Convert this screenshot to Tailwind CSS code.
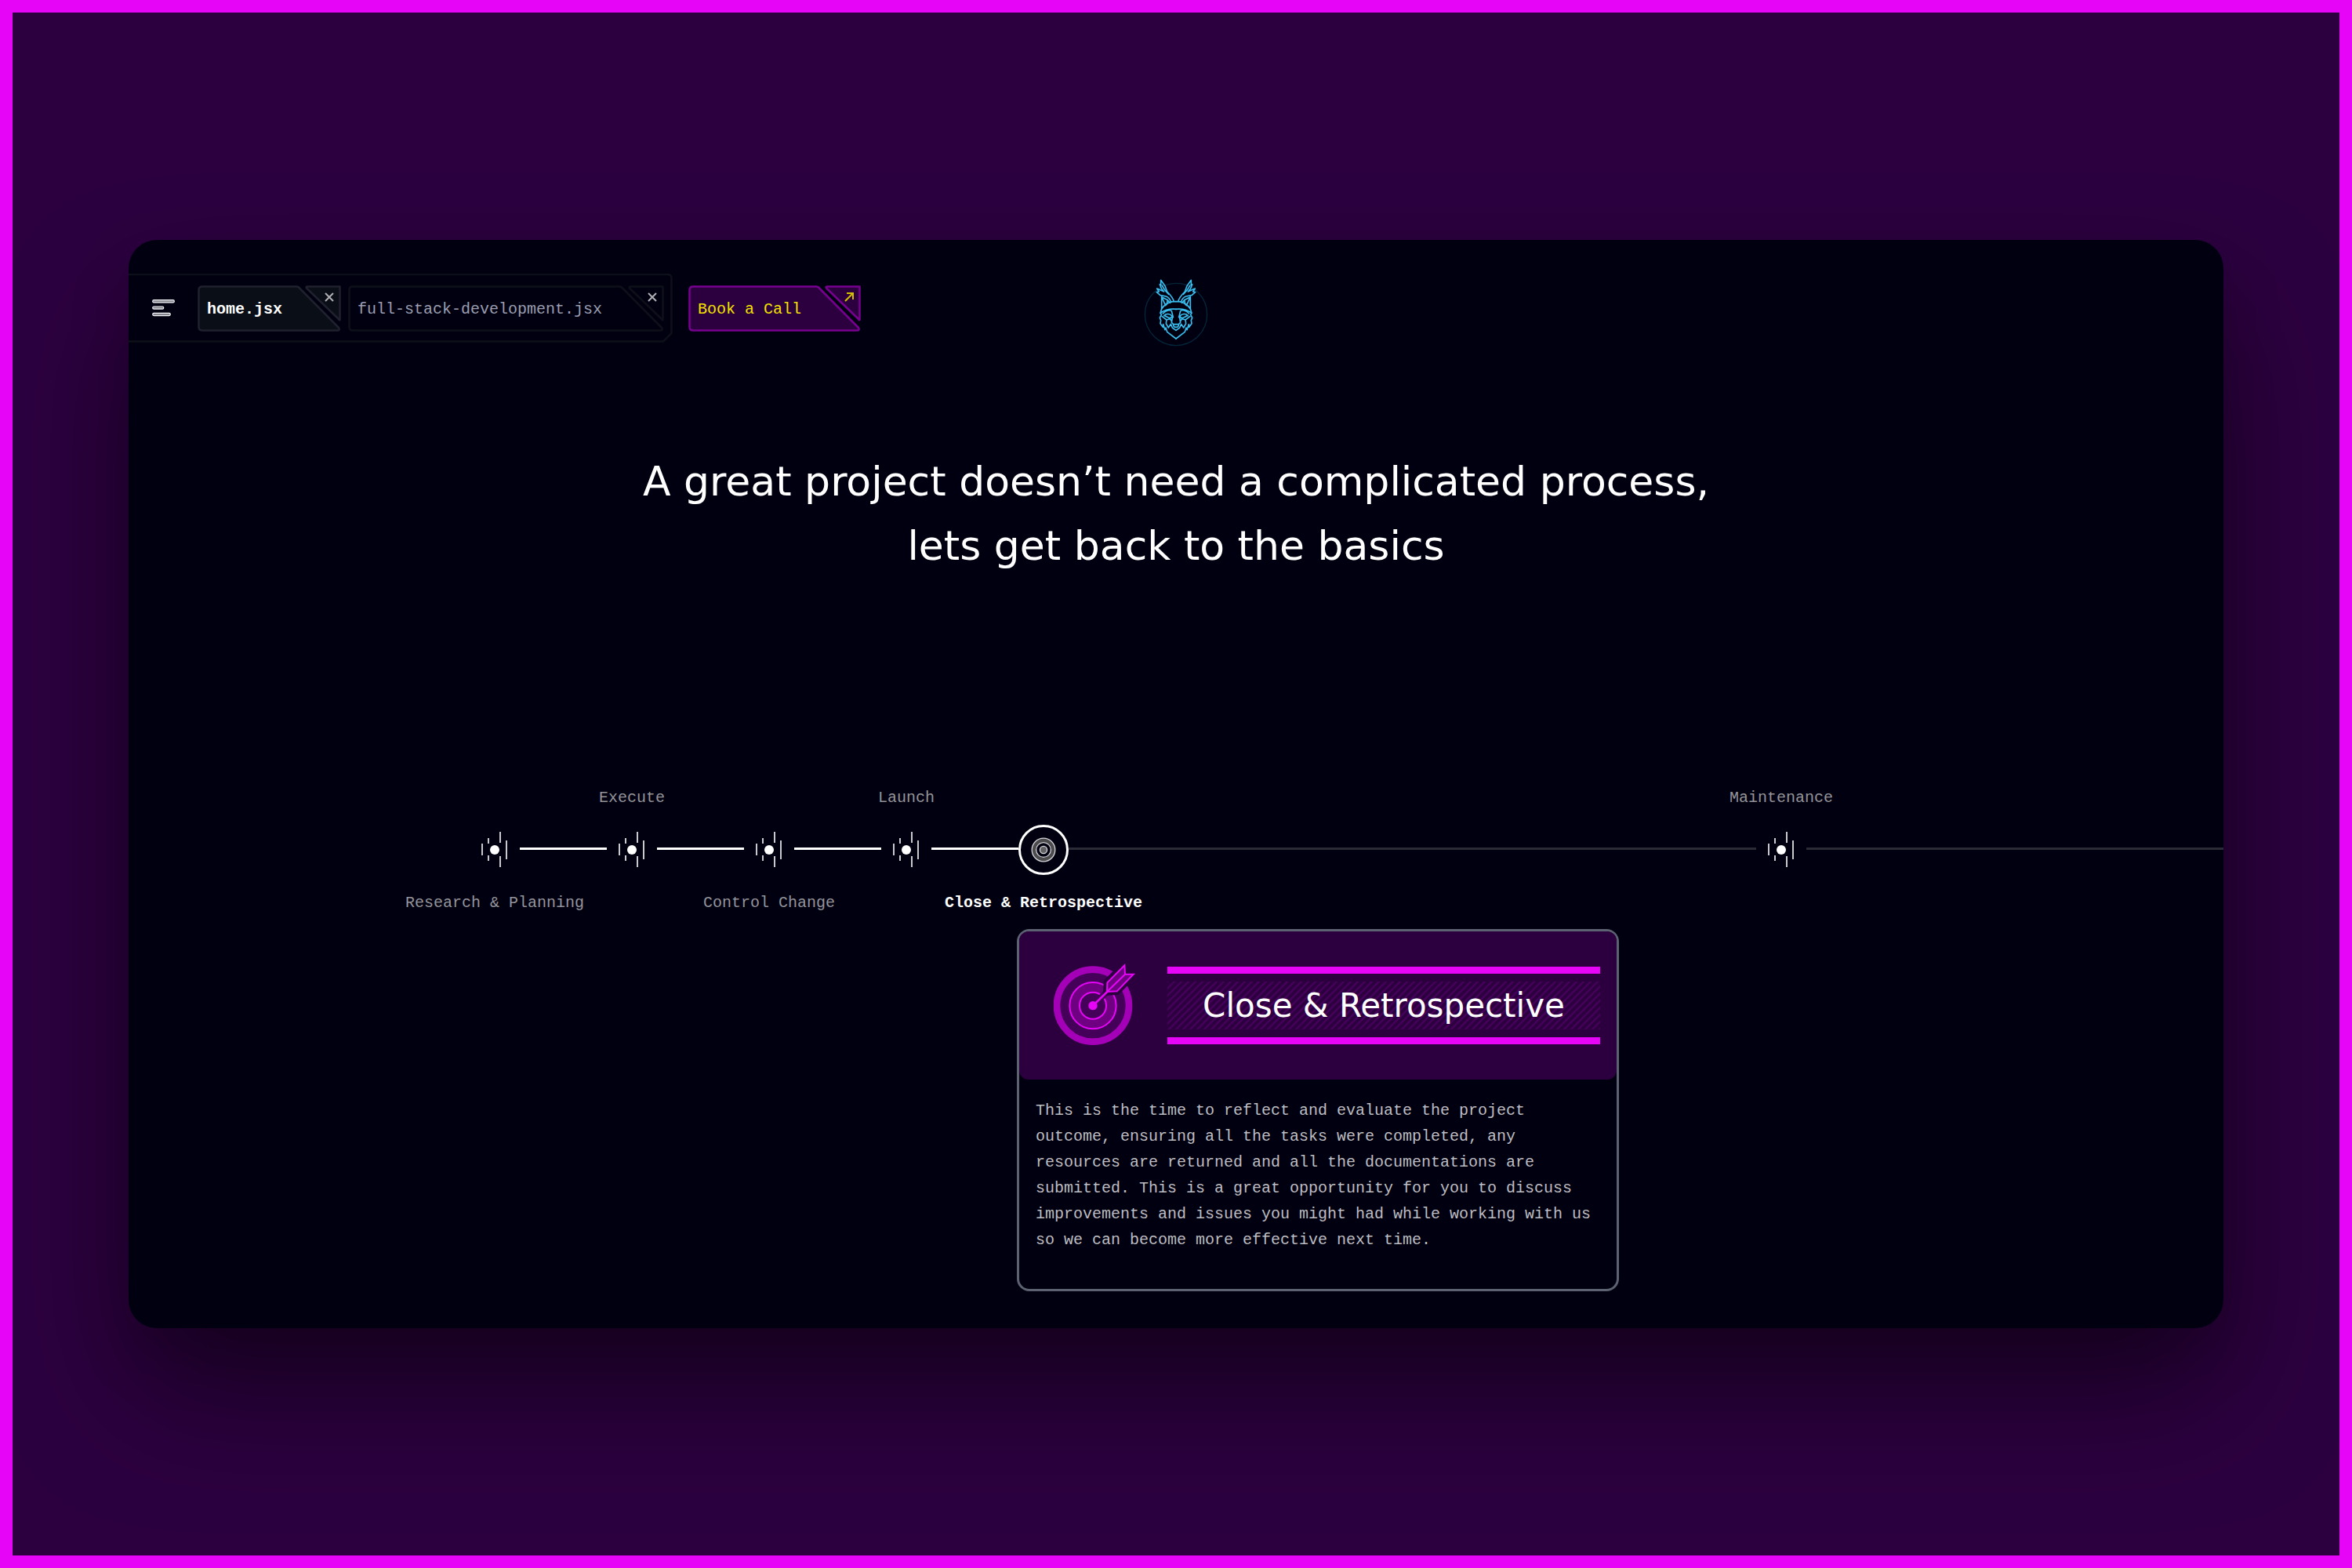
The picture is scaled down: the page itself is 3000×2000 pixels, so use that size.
<!DOCTYPE html>
<html lang="en">
<head>
<meta charset="utf-8">
<meta name="viewport" content="width=device-width, initial-scale=1">
<title>Our process</title>
<script src="https://cdn.jsdelivr.net/npm/@tailwindcss/browser@4"></script>
</head>
<body class="min-h-screen flex flex-col justify-center border-16 border-[#e605f6] bg-[#2c003f] px-[148px] py-20 font-['Liberation_Mono',monospace] text-[20px] leading-6 text-[#94949b]">

<!-- Shared icon shapes -->
<svg class="hidden" aria-hidden="true">
  <symbol id="cross" viewBox="0 0 12 12"><path d="M1 1L11 11M11 1L1 11" fill="none" stroke="currentColor" stroke-width="2"/></symbol>
  <symbol id="step" viewBox="0 0 64 64">
    <circle cx="32" cy="32" r="6" fill="#fff"/>
    <g fill="#c9c9cd">
      <rect x="15" y="24" width="2" height="15"/>
      <rect x="23" y="17" width="2" height="7"/><rect x="23" y="39" width="2" height="7"/>
      <rect x="38" y="9" width="2" height="14"/><rect x="38" y="40" width="2" height="14"/>
      <rect x="46" y="20" width="2" height="24"/>
    </g>
  </symbol>
</svg>

<div class="overflow-hidden rounded-[36px] bg-[#000010] pt-[43px] pb-[47px] shadow-[0_88px_160px_-16px_rgb(0_0_0/0.5),0_32px_80px_rgb(0_0_0/0.15)]">
  <header class="grid grid-cols-[1fr_auto_1fr] items-start">
    <div class="flex items-center gap-5">
      <nav aria-label="Open pages" class="relative flex h-[88px] items-center pl-[30px] pr-[11px]">
        <svg class="absolute inset-0" width="694" height="88" viewBox="0 0 694 88" fill="none" stroke="#0e1019" stroke-width="2.5" aria-hidden="true"><path d="M0 1H687Q692.5 1 692.5 6V76L682 86.500H0"/></svg>
        <button type="button" aria-label="Menu" class="relative mr-[29px]">
          <svg width="29" height="22" viewBox="0 0 29 22" fill="#85858f" stroke="#f4f4f6" stroke-width="1.2" aria-hidden="true"><rect x=".7" y=".7" width="27.6" height="3.2" rx="1.5"/><rect x=".7" y="9" width="14" height="3.2" rx="1.5"/><rect x=".7" y="17.4" width="22.6" height="3.2" rx="1.5"/></svg>
        </button>
        <ul class="relative flex gap-[9px]">
          <li class="relative flex h-[59px] w-[183px] justify-between">
            <svg class="absolute inset-0" width="183" height="59" viewBox="0 0 183 59" fill="#0a0e17" stroke="#20212e" stroke-width="2.500" stroke-linejoin="round" aria-hidden="true"><path d="M6 1.500H126Q128 1.500 129 2.500L180 54Q182 57.500 178 57.500H6Q1.500 57.500 1.500 53V6Q1.500 1.500 6 1.500Z"/><path d="M140 1.500H181.500V44Q181 45 180 43L139 3.500Q138 1.500 140 1.500Z"/></svg>
            <a href="#home" class="relative self-center pt-[3px] pl-3 font-bold text-white">home.jsx</a>
            <button type="button" aria-label="Close home.jsx" class="relative grid size-[30px] place-items-center text-[#b0b0b5]"><svg width="12" height="12" aria-hidden="true"><use href="#cross"/></svg></button>
          </li>
          <li class="relative flex h-[59px] w-[403px] justify-between">
            <svg class="absolute inset-0" width="403" height="59" viewBox="0 0 403 59" fill="none" stroke="#0e1019" stroke-width="2.500" stroke-linejoin="round" aria-hidden="true"><path d="M6 1.500H346Q348 1.500 349 2.500L400 54Q402 57.500 398 57.500H6Q1.500 57.500 1.500 53V6Q1.500 1.500 6 1.500Z"/><path d="M360 1.500H401.500V44Q401 45 400 43L359 3.500Q358 1.500 360 1.500Z"/></svg>
            <a href="#full-stack" class="relative self-center pt-[3px] pl-3 text-[#9a9eb0]">full-stack-development.jsx</a>
            <button type="button" aria-label="Close full-stack-development.jsx" class="relative grid size-[30px] place-items-center text-[#b0b0b5]"><svg width="12" height="12" aria-hidden="true"><use href="#cross"/></svg></button>
          </li>
        </ul>
      </nav>
      <a href="#call" class="relative flex h-[59px] w-[220px] justify-between text-[#f2e000]">
        <svg class="absolute inset-0" width="220" height="59" viewBox="0 0 220 59" fill="#2c003f" stroke="#780090" stroke-width="2.500" stroke-linejoin="round" aria-hidden="true"><path d="M6 1.500H163Q165 1.500 166 2.500L217 54Q219 57.500 215 57.500H6Q1.500 57.500 1.500 53V6Q1.500 1.500 6 1.500Z"/><path d="M177 1.500H218.500V44Q218 45 217 43L176 3.500Q175 1.500 177 1.500Z"/></svg>
        <span class="relative self-center pt-[3px] pl-3">Book a Call</span>
        <span class="relative grid size-[30px] place-items-center"><svg width="12" height="12" viewBox="0 0 12 12" fill="none" stroke="#d2c000" stroke-width="2" aria-hidden="true"><path d="M1 11L11 1M3 1H11V9"/></svg></span>
      </a>
    </div>
    <a href="#" aria-label="Home">
      <svg width="82" height="100" viewBox="-3 -3 246 300" fill="none" stroke="#38bdee" stroke-width="5" stroke-linejoin="round" stroke-linecap="round" aria-hidden="true">
        <circle cx="120" cy="153" r="119" stroke="#04263b" stroke-width="4"/>
        <g id="half">
          <path d="M112 104C108 88 98 78 86 66L78 44L62 22V40L58 38L64 54L74 66L47 54L55 66L46 68L60 80L82 84C92 88 98 96 101 106"/>
          <path d="M66 42L76 58L92 76"/>
          <path d="M120 104H108C90 106 76 116 65 132V86L88 98L97 109M67 90L80 119M88 98L84 116"/>
          <path d="M65 132L60 148C80 134 98 131 120 133M60 148L64 154L58 166L62 176L60 188L70 202L71 191L78 212L81 204L86 220L120 246"/>
          <path d="M70 150C80 138 94 134 103 140L109 164M74 158C82 148 98 150 106 161L99 167C88 167 84 160 76 158M66 160L84 174L97 170L104 180M84 174L82 188L91 204L100 190L106 204L120 214M106 166L103 184L110 191H120"/>
          <path d="M110 191C110 199 115 202 120 202"/>
        </g>
        <use href="#half" transform="matrix(-1 0 0 1 240 0)"/>
      </svg>
    </a>
  </header>

  <main>
    <h1 class="mt-[124px] text-center font-['DejaVu_Sans',sans-serif] text-[52px] leading-[82px] text-white">A great project doesn’t need a complicated process,<br>lets get back to the basics</h1>

    <ol class="mt-[269px] flex pl-[435px]">
      <li class="flex w-16 shrink-0 flex-col items-center whitespace-nowrap pt-[46px]">
        <svg width="64" height="64" aria-hidden="true"><use href="#step"/></svg>
        <span class="mt-6">Research &amp; Planning</span>
      </li>
      <li class="mt-[75px] h-[3px] w-[111px] shrink-0 bg-white" role="presentation"></li>
      <li class="flex w-16 shrink-0 flex-col items-center whitespace-nowrap">
        <span class="mb-[22px]">Execute</span>
        <svg width="64" height="64" aria-hidden="true"><use href="#step"/></svg>
      </li>
      <li class="mt-[75px] h-[3px] w-[111px] shrink-0 bg-white" role="presentation"></li>
      <li class="flex w-16 shrink-0 flex-col items-center whitespace-nowrap pt-[46px]">
        <svg width="64" height="64" aria-hidden="true"><use href="#step"/></svg>
        <span class="mt-6">Control Change</span>
      </li>
      <li class="mt-[75px] h-[3px] w-[111px] shrink-0 bg-white" role="presentation"></li>
      <li class="flex w-16 shrink-0 flex-col items-center whitespace-nowrap">
        <span class="mb-[22px]">Launch</span>
        <svg width="64" height="64" aria-hidden="true"><use href="#step"/></svg>
      </li>
      <li class="mt-[75px] h-[3px] w-[111px] shrink-0 bg-white" role="presentation"></li>
      <li aria-current="step" class="flex w-16 shrink-0 flex-col items-center whitespace-nowrap pt-[46px]">
        <svg width="64" height="64" viewBox="0 0 64 64" fill="none" aria-hidden="true">
          <circle cx="32" cy="32" r="30.5" stroke="#fff" stroke-width="3"/>
          <circle cx="32" cy="32" r="12.5" stroke="#4c4c4e" stroke-width="5"/>
          <g stroke="#d6d6da" stroke-width="1.3"><circle cx="32" cy="32" r="14.8"/><circle cx="32" cy="32" r="9.4"/><circle cx="32" cy="32" r="4.6" fill="#626264"/></g>
        </svg>
        <span class="mt-6 font-bold text-white">Close &amp; Retrospective</span>
      </li>
      <li class="mt-[75px] h-[3px] flex-[877] bg-[#2b2b38]" role="presentation"></li>
      <li class="flex w-16 shrink-0 flex-col items-center whitespace-nowrap">
        <span class="mb-[22px]">Maintenance</span>
        <svg width="64" height="64" aria-hidden="true"><use href="#step"/></svg>
      </li>
      <li class="mt-[75px] h-[3px] flex-[532] bg-[#2b2b38]" role="presentation"></li>
    </ol>

    <article class="mt-[21px] ml-[1133px] max-w-3xl rounded-2xl border-3 border-[#5d6273]">
      <header class="flex items-center gap-[41px] rounded-xl bg-[#2c003f] py-10 pr-[21px] pl-11">
        <svg class="shrink-0" width="104" height="109" viewBox="42 38 312 327" fill="none" aria-hidden="true">
          <circle cx="192" cy="202" r="138" fill="#45005a" stroke="#a300b8" stroke-width="26"/>
          <circle cx="192" cy="202" r="89" fill="#6f0082" stroke="#e605f6" stroke-width="6"/>
          <circle cx="192" cy="202" r="51" fill="#45005a" stroke="#e605f6" stroke-width="6"/>
          <path d="M215 179L245 150" stroke="#45005a" stroke-width="24"/>
          <path d="M244 150L246 112L314 44L317 80H351L284 148Z" fill="#2c003f" stroke="#2c003f" stroke-width="26"/>
          <circle cx="192" cy="202" r="17" fill="#e605f6"/>
          <path d="M192 202L250 146" stroke="#e605f6" stroke-width="8"/>
          <path d="M246 149L247 114L313 48L315 82H347L284 147Z" fill="#6f0082" stroke="#e605f6" stroke-width="6"/>
          <path d="M246 149L315 82" stroke="#e605f6" stroke-width="6"/>
        </svg>
        <div class="flex flex-1 flex-col justify-center border-y-9 border-[#e605f6] py-[10px]">
          <div class="relative flex h-[61px] items-center justify-center">
            <svg class="absolute inset-0 size-full" aria-hidden="true">
              <defs><pattern id="hatch" width="9" height="9" patternUnits="userSpaceOnUse"><path d="M-2 2L2 -2M-2 11L11 -2M7 11L11 7" stroke="#45005a" stroke-width="2.4"/></pattern></defs>
              <rect width="100%" height="100%" fill="url(#hatch)"/>
            </svg>
            <h2 class="relative font-['DejaVu_Sans',sans-serif] text-[42px] leading-[61px] text-white">Close &amp; Retrospective</h2>
          </div>
        </div>
      </header>
      <p class="px-[21px] pt-[23px] pb-[46px] leading-[33px] text-[#bdbdc1]">This is the time to reflect and evaluate the project outcome, ensuring all the tasks were completed, any resources are returned and all the documentations are submitted. This is a great opportunity for you to discuss improvements and issues you might had while working with us so we can become more effective next time.</p>
    </article>
  </main>
</div>
</body>
</html>
